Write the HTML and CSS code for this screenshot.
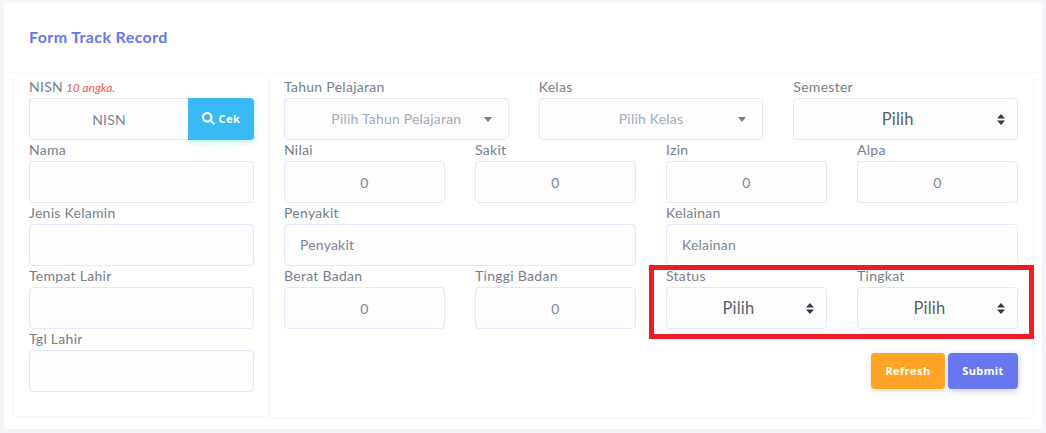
FILE: index.html
```html
<!DOCTYPE html>
<html lang="id">
<head>
<meta charset="utf-8">
<title>Form Track Record</title>
<link rel="stylesheet" href="styles.css">
</head>
<body>
<div class="card">
  <header class="card-header"><h4>Form Track Record</h4></header>
  <div class="card-body">
    <section class="panel panel-left">
      <div class="field">
        <div class="label">NISN <em>10 angka.</em></div>
        <div class="input-group">
          <div class="control grouped center">NISN</div>
          <div class="btn btn-info"><svg class="search" viewBox="0 0 512 512" width="13" height="13"><path fill="#fff" d="M505 442.700L405.300 343c-4.500-4.500-10.600-7-17-7H372c27.600-35.300 44-79.700 44-128C416 93.100 322.900 0 208 0S0 93.100 0 208s93.100 208 208 208c48.300 0 92.700-16.400 128-44v16.300c0 6.400 2.500 12.500 7 17l99.700 99.700c9.400 9.400 24.600 9.400 33.900 0l28.300-28.300c9.400-9.400 9.400-24.600.1-34zM208 336c-70.700 0-128-57.200-128-128 0-70.700 57.200-128 128-128 70.700 0 128 57.200 128 128 0 70.700-57.200 128-128 128z"/></svg>Cek</div>
        </div>
      </div>
      <div class="field"><div class="label">Nama</div><div class="control"></div></div>
      <div class="field"><div class="label">Jenis Kelamin</div><div class="control"></div></div>
      <div class="field"><div class="label">Tempat Lahir</div><div class="control"></div></div>
      <div class="field"><div class="label">Tgl Lahir</div><div class="control"></div></div>
    </section>
    <section class="panel panel-right">
      <div class="row thirds">
        <div class="field"><div class="label">Tahun Pelajaran</div><div class="control center muted">Pilih Tahun Pelajaran<svg class="caret" width="8" height="5" viewBox="0 0 8 5"><path fill="#7d7d7d" d="M0 0h8L4 5z"/></svg></div></div>
        <div class="field"><div class="label">Kelas</div><div class="control center muted">Pilih Kelas<svg class="caret" width="8" height="5" viewBox="0 0 8 5"><path fill="#7d7d7d" d="M0 0h8L4 5z"/></svg></div></div>
        <div class="field"><div class="label">Semester</div><div class="control center choice">Pilih<svg class="updown" width="8" height="11" viewBox="0 0 8 11"><path fill="#343a40" d="M4 0l4 4.500H0zM0 6.500h8L4 11z"/></svg></div></div>
      </div>
      <div class="row quarters">
        <div class="field"><div class="label">Nilai</div><div class="control center">0</div></div>
        <div class="field"><div class="label">Sakit</div><div class="control center">0</div></div>
        <div class="field"><div class="label">Izin</div><div class="control center">0</div></div>
        <div class="field"><div class="label">Alpa</div><div class="control center">0</div></div>
      </div>
      <div class="row halves">
        <div class="field"><div class="label">Penyakit</div><div class="control start">Penyakit</div></div>
        <div class="field"><div class="label">Kelainan</div><div class="control start">Kelainan</div></div>
      </div>
      <div class="row quarters">
        <div class="field"><div class="label">Berat Badan</div><div class="control center">0</div></div>
        <div class="field"><div class="label">Tinggi Badan</div><div class="control center">0</div></div>
        <div class="field"><div class="label">Status</div><div class="control center choice">Pilih<svg class="updown" width="8" height="11" viewBox="0 0 8 11"><path fill="#343a40" d="M4 0l4 4.500H0zM0 6.500h8L4 11z"/></svg></div></div>
        <div class="field"><div class="label">Tingkat</div><div class="control center choice">Pilih<svg class="updown" width="8" height="11" viewBox="0 0 8 11"><path fill="#343a40" d="M4 0l4 4.500H0zM0 6.500h8L4 11z"/></svg></div></div>
      </div>
      <div class="actions">
        <div class="btn btn-warning">Refresh</div>
        <div class="btn btn-primary">Submit</div>
      </div>
    </section>
  </div>
</div>
<div class="highlight"></div>
</body>
</html>
```
FILE: styles.css
```css
* { box-sizing: border-box; }
html, body { height: 100%; }
body {
  margin: 0;
  padding: 3px 4px 4px;
  background: #f4f6f9;
  font-family: "Lato", "Noto Sans", sans-serif;
  font-size: 14px;
  color: #6c757d;
  overflow: hidden;
  position: relative;
}
.card {
  background: #fff;
  border-radius: 3px;
  height: 426px;
  box-shadow: 0 4px 8px rgba(0, 0, 0, 0.02);
}
.card-header {
  height: 70px;
  padding: 0 25px;
  display: flex;
  align-items: center;
  border-bottom: 1px solid #f9f9f9;
}
.card-header h4 {
  margin: 0 0 2px;
  font-size: 16px;
  font-weight: 700;
  color: #6777ef;
  letter-spacing: 0.38px;
}
.card-body {
  display: flex;
  gap: 2px;
  padding: 3px 9px 0 10px;
}
.panel {
  background: #fff;
  box-shadow: 0 1px 4px rgba(0, 0, 0, 0.06);
}
.panel-left { width: 254px; height: 340px; padding: 1px 14px 0 15px; }
.panel-right { width: 763px; height: 341px; padding: 1px 15px 0 14px; }
.row { display: grid; column-gap: 30px; }
.thirds { grid-template-columns: repeat(3, 1fr); }
.quarters { grid-template-columns: repeat(4, 1fr); }
.halves { grid-template-columns: repeat(2, 1fr); }
.label {
  height: 21px;
  line-height: 20px;
  color: #767e88;
  letter-spacing: 0.28px;
  white-space: nowrap;
}
.label em {
  font-size: 12px;
  color: #fc544b;
  letter-spacing: 0;
  margin-left: -1px;
}
.control {
  position: relative;
  height: 42px;
  background: #fdfdff;
  border: 1px solid #e4e6fc;
  border-radius: 4px;
  display: flex;
  align-items: center;
  color: #7d8694;
  letter-spacing: 0.2px;
}
.center { justify-content: center; }
.start { padding: 0 0 2px 15px; }
.muted { color: #a4abb5; padding-bottom: 2px; }
.choice { color: #55606d; font-size: 16.500px; padding: 0 16px 0 0; }
.caret { position: absolute; right: 16px; top: 18px; }
.updown { position: absolute; right: 12px; top: 15px; }
.input-group { display: flex; }
.grouped { flex: 1; border-radius: 4px 0 0 4px; border-right: 0; }
.btn {
  display: flex;
  align-items: center;
  justify-content: center;
  padding-bottom: 1px;
  color: #fff;
  font-family: "Noto Sans", sans-serif;
  font-weight: 700;
  font-size: 11px;
  letter-spacing: 0.45px;
  border-radius: 4px;
}
.btn-info {
  width: 66px;
  height: 42px;
  gap: 4px;
  background: #3abaf4;
  border-radius: 0 4px 4px 0;
  box-shadow: 0 2px 6px #b7e6fb;
}
.btn-warning { width: 74px; background: #ffa426; box-shadow: 0 2px 6px #ffe2ba; }
.btn-primary { width: 70px; background: #6777ef; box-shadow: 0 2px 6px #c4cbf8; }
.actions {
  display: flex;
  justify-content: flex-end;
  gap: 3px;
  height: 36px;
  margin-top: 24px;
}
.highlight {
  position: absolute;
  left: 649px;
  top: 265px;
  width: 385px;
  height: 74px;
  border: 5px solid #ed1c24;
}
```
